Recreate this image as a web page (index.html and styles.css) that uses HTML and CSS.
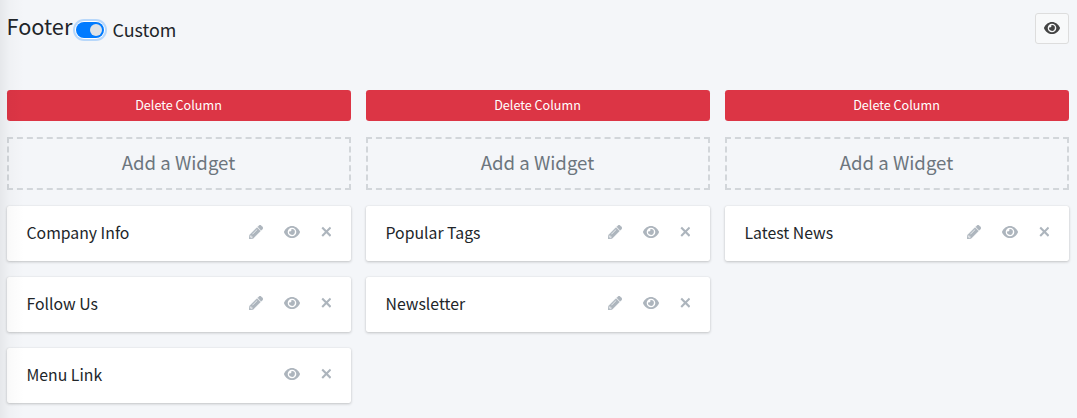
FILE: index.html
```html
<!DOCTYPE html>
<html lang="en">
<head>
<meta charset="utf-8">
<title>Footer</title>
<link rel="stylesheet" href="styles.css">
</head>
<body>
<svg class="sprite" aria-hidden="true">
  <symbol id="eye" viewBox="0 0 16 12"><path fill-rule="evenodd" d="M.1 5.6C1.6 2.3 4.600 0 8 0s6.400 2.300 7.900 5.600a1 1 0 0 1 0 .8C14.400 9.700 11.400 12 8 12S1.600 9.700.1 6.400a1 1 0 0 1 0-.8zM8 1.700a4.300 4.300 0 1 0 0 8.600 4.300 4.300 0 0 0 0-8.600zM8 3.100a2.900 2.900 0 1 1-2.800 2.100 1.450 1.450 0 0 0 2-2z"/></symbol>
  <symbol id="pencil" viewBox="0 0 512 512"><path d="M497.9 142.1l-46.1 46.1c-4.7 4.7-12.3 4.7-17 0l-111-111c-4.7-4.7-4.7-12.3 0-17l46.1-46.1c18.7-18.7 49.1-18.7 67.9 0l60.1 60.1c18.8 18.7 18.8 49.1 0 67.9zM284.2 99.8L21.6 362.4.4 483.9c-2.9 16.4 11.4 30.6 27.8 27.8l121.5-21.3 262.6-262.6c4.7-4.7 4.7-12.3 0-17l-111-111c-4.8-4.7-12.4-4.7-17.1 0zM124.1 339.9c-5.5-5.5-5.5-14.3 0-19.8l154-154c5.5-5.500 14.3-5.5 19.8 0s5.5 14.3 0 19.8l-154 154c-5.5 5.5-14.3 5.5-19.8 0zM88 424h48v36.3l-64.5 11.3-31.1-31.1L51.7 376H88v48z"/></symbol>
  <symbol id="times" viewBox="0 0 10 14"><path d="M1.200 2.500L9.600 10.900M9.600 2.500L1.200 10.900" fill="none" stroke="currentColor" stroke-width="2.100"/></symbol>
</svg>
<header class="header">
  <h1 class="title">Footer</h1>
  <span class="switch"><span class="knob"></span></span>
  <span class="switch-label">Custom</span>
  <button class="preview"><svg class="icon eye"><use href="#eye"/></svg></button>
</header>
<main class="columns">
  <section class="column">
    <button class="delete">Delete Column</button>
    <div class="add">Add a Widget</div>
    <div class="card"><span class="name">Company Info</span><svg class="icon pencil"><use href="#pencil"/></svg><svg class="icon eye"><use href="#eye"/></svg><svg class="icon times"><use href="#times"/></svg></div>
    <div class="card"><span class="name">Follow Us</span><svg class="icon pencil"><use href="#pencil"/></svg><svg class="icon eye"><use href="#eye"/></svg><svg class="icon times"><use href="#times"/></svg></div>
    <div class="card"><span class="name">Menu Link</span><svg class="icon eye"><use href="#eye"/></svg><svg class="icon times"><use href="#times"/></svg></div>
  </section>
  <section class="column">
    <button class="delete">Delete Column</button>
    <div class="add">Add a Widget</div>
    <div class="card"><span class="name">Popular Tags</span><svg class="icon pencil"><use href="#pencil"/></svg><svg class="icon eye"><use href="#eye"/></svg><svg class="icon times"><use href="#times"/></svg></div>
    <div class="card"><span class="name">Newsletter</span><svg class="icon pencil"><use href="#pencil"/></svg><svg class="icon eye"><use href="#eye"/></svg><svg class="icon times"><use href="#times"/></svg></div>
  </section>
  <section class="column">
    <button class="delete">Delete Column</button>
    <div class="add">Add a Widget</div>
    <div class="card"><span class="name">Latest News</span><svg class="icon pencil"><use href="#pencil"/></svg><svg class="icon eye"><use href="#eye"/></svg><svg class="icon times"><use href="#times"/></svg></div>
  </section>
</main>
<div class="edge-shade"></div>
</body>
</html>
```
FILE: styles.css
```css
* { box-sizing: border-box; }
body {
  margin: 0;
  height: 418px;
  overflow: hidden;
  background: #f4f6f9;
  color: #212529;
  font-family: "Source Sans Pro", "Noto Sans CJK SC", sans-serif;
}
button { font-family: inherit; margin: 0; }
.sprite { display: none; }
.icon { display: block; fill: currentColor; flex: none; color: #adb5bd; }
.eye { width: 16px; height: 12px; }
.pencil { width: 14px; height: 14px; stroke: currentColor; stroke-width: 12px; }
.times { width: 10px; height: 14px; }

.header {
  display: flex;
  align-items: flex-start;
  height: 90px;
  padding: 12px 8px 0 6.5px;
}
.title { margin: -1px 0 0; font-size: 21.7px; font-weight: 400; line-height: 29px; width: 69.5px; }
.switch {
  display: flex;
  justify-content: flex-end;
  width: 28px;
  height: 16px;
  margin-top: 10px;
  padding: 2px;
  border-radius: 8px;
  background: #007bff;
  box-shadow: 0 0 0 1px #fff, 0 0 0 3px rgba(0, 123, 255, .25);
}
.knob { width: 12px; height: 12px; border-radius: 50%; background: #dee2e6; }
.switch-label { margin: 5px 0 0 8.5px; font-size: 17.9px; line-height: 24px; }
.preview {
  display: flex;
  align-items: center;
  justify-content: center;
  width: 34px;
  height: 31px;
  margin: 1px 0 0 auto;
  padding: 0 0 1px;
  border: 1px solid #ddd;
  border-radius: 3px;
  background: #f8f9fa;
}
.preview .icon { color: #444; }

.columns {
  display: grid;
  grid-template-columns: repeat(3, 344px);
  column-gap: 15px;
  padding-left: 7px;
}
.column { display: flex; flex-direction: column; }
.delete {
  height: 31px;
  padding: 0 1px 2px 0;
  border: 0;
  border-radius: 3.2px;
  background: #dc3545;
  color: #fff;
  font-size: 12.6px;
  line-height: 29px;
}
.add {
  height: 53px;
  margin: 16px 0 15.6px;
  padding-right: 1px;
  border: 2px dashed #d2d6da;
  color: #6c757d;
  font-size: 18.6px;
  line-height: 45px;
  text-align: center;
}
.card {
  display: flex;
  align-items: center;
  height: 55.2px;
  margin-bottom: 16px;
  padding: 0 20px 3px 19.5px;
  border-radius: 2px;
  background: #fff;
  box-shadow: 0 0 1px rgba(0, 0, 0, .125), 0 1px 3px rgba(0, 0, 0, .2);
}
.name { margin-right: auto; padding-top: 2px; font-size: 15.8px; line-height: 24px; }
.card .eye { margin: 0 21px; }

.edge-shade {
  position: absolute;
  inset: 0 auto 0 0;
  width: 24px;
  background: linear-gradient(to right, rgba(0, 0, 0, .06), rgba(0, 0, 0, .02) 40%, transparent);
}
```
